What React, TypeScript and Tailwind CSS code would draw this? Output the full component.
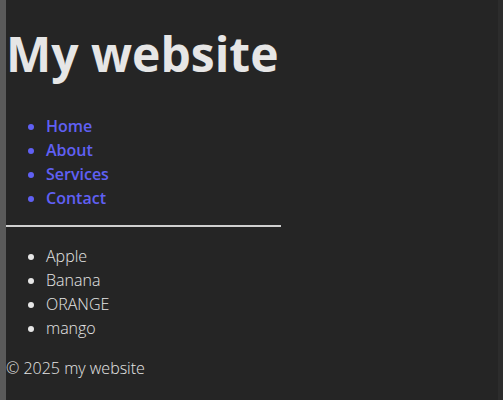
const navLinks = ["Home", "About", "Services", "Contact"];
const fruits = ["Apple", "Banana", "ORANGE", "mango"];

export default function App() {
  return (
    <div
      className="min-h-screen bg-[#252525] text-[#e6e6e6] border-l-[6px] border-l-[#5a5a5a] border-r-[5px] border-r-[#2c2c2c]"
      style={{ fontFamily: "'Open Sans', 'Noto Sans', sans-serif" }}
    >
      <h1 className="pt-[25px] text-[48px] leading-[1.2] font-bold">My website</h1>
      <ul className="mt-[31px] list-disc pl-10 text-[#6060f4] marker:text-[#6060f4]">
        {navLinks.map((l) => (
          <li key={l} className="text-[16px] leading-[24px] font-semibold">
            <a href="#">{l}</a>
          </li>
        ))}
      </ul>
      <hr className="mt-[15px] w-[275px] border-t-2 border-[#d0d0d0]" />
      <ul className="mt-[17px] list-disc pl-10">
        {fruits.map((f) => (
          <li key={f} className="text-[16px] leading-[24px] font-light">
            {f}
          </li>
        ))}
      </ul>
      <footer className="mt-[16px] text-[16px] leading-[24px] font-light">© 2025 my website</footer>
    </div>
  );
}
